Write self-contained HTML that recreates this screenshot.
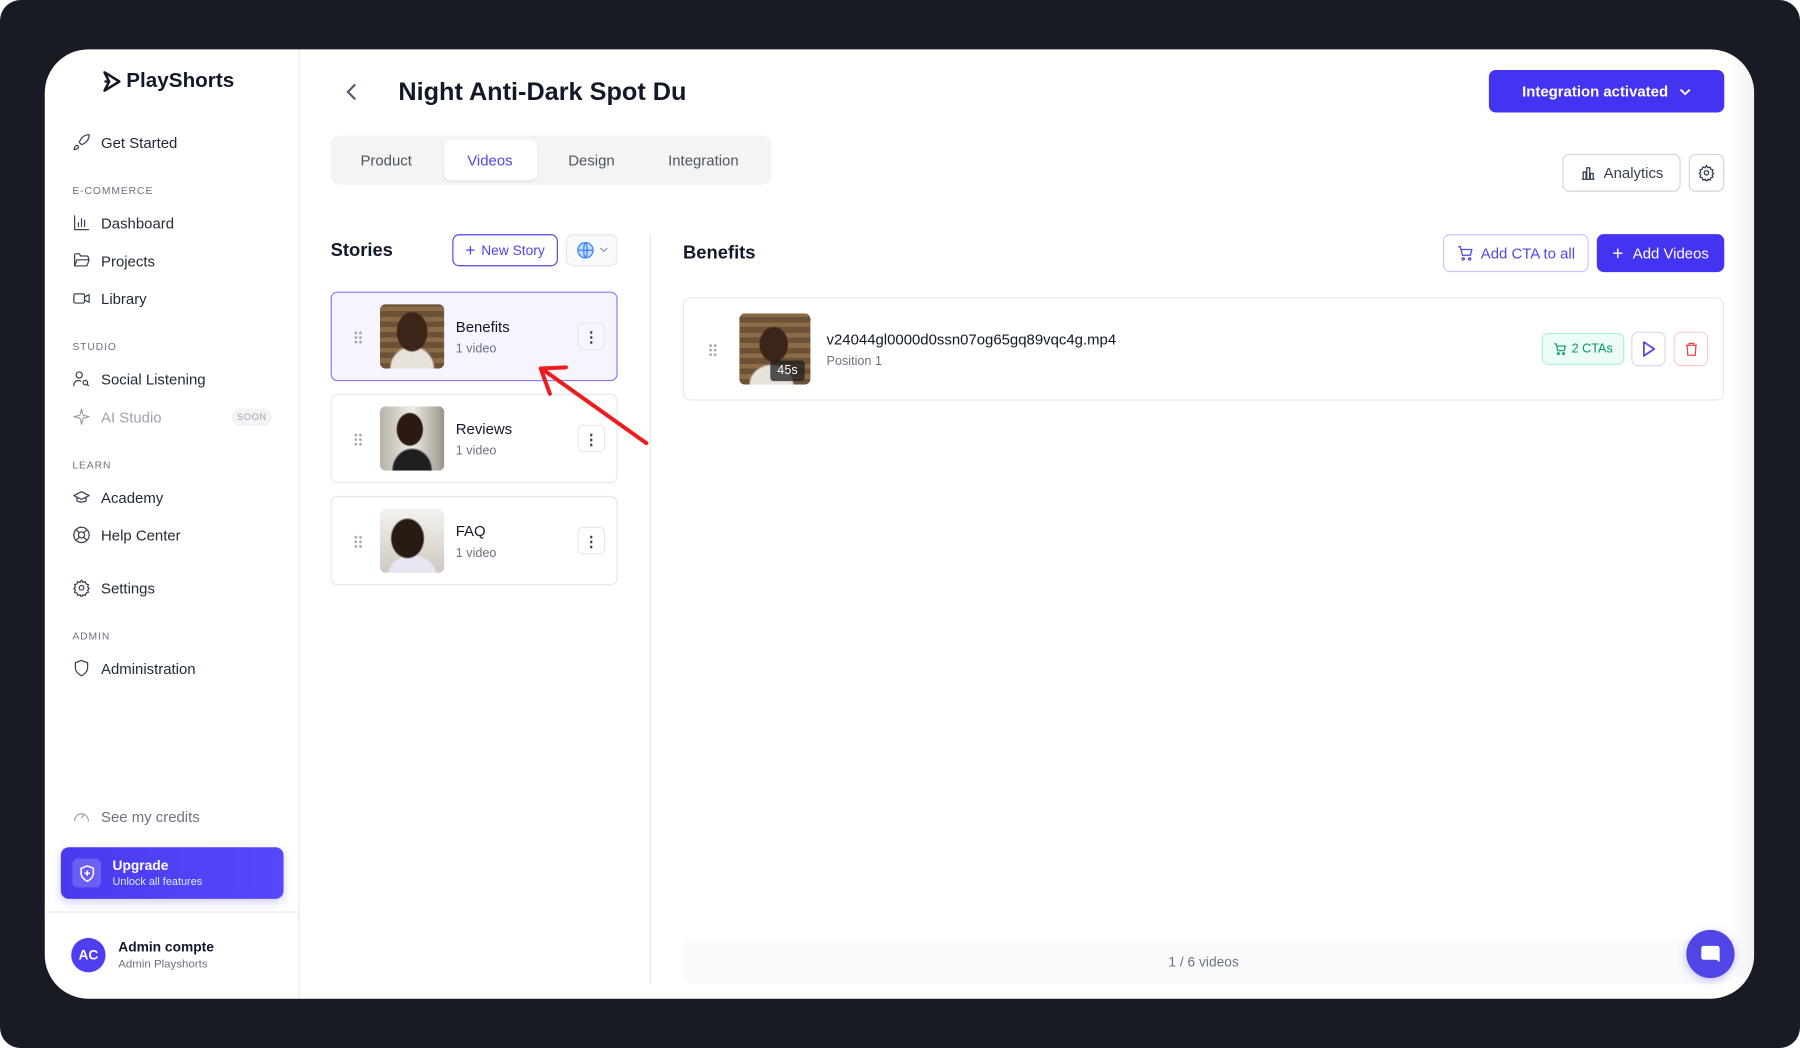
<!DOCTYPE html>
<html><head><meta charset="utf-8"><style>
*{box-sizing:border-box;margin:0;padding:0}
html,body{width:1800px;height:1048px;overflow:hidden;background:#fff}
body{font-family:"Liberation Sans",sans-serif;color:#111827}
#s{position:absolute;left:0;top:0;width:1568px;height:913px;transform:scale(1.14796);transform-origin:0 0;background:#181b23;border-radius:18px;overflow:hidden}
.a{position:absolute}
.panel{left:39px;top:43px;width:1489px;height:827px;background:#fff;border-radius:38px;overflow:hidden}
.side{left:0;top:0;width:222px;height:827px;border-right:1px solid #e5e7eb}
.nav{position:absolute;left:24px;font-size:13px;color:#1f2937;display:flex;align-items:center;gap:9px;height:20px}
.nav svg{width:16px;height:16px;stroke:#374151;fill:none;stroke-width:1.6;stroke-linecap:round;stroke-linejoin:round}
.lbl{position:absolute;left:24px;font-size:9px;letter-spacing:.8px;color:#6b7280}
.btn{position:absolute;border-radius:6px;display:flex;align-items:center;justify-content:center;font-size:13px}
.card{position:absolute;left:249px;width:250px;height:78px;border:1px solid #e5e7eb;border-radius:6px;background:#fff}
.card .th{position:absolute;left:42px;top:10px;width:56px;height:56px;border-radius:5px;overflow:hidden}
.card .t{position:absolute;left:108px;top:22px;font-size:13px;color:#111827}
.card .st{position:absolute;left:108px;top:43px;font-size:11px;color:#6b7280}
.card .k{position:absolute;left:214px;top:26px;width:24px;height:24px;border:1px solid #e5e7eb;border-radius:5px;display:flex;align-items:center;justify-content:center;font-size:13px;font-weight:bold;color:#374151;line-height:1}
.dots{position:absolute;width:8px;height:12px;background-image:radial-gradient(circle,#9ca3af 1px,transparent 1.3px);background-size:4px 4px}
</style></head><body><div id="s">
<div class="a panel">
 <div class="a side">
  <div class="a" style="left:51px;top:17px;display:flex;align-items:center;gap:5px;font-size:18px;font-weight:bold;color:#111827">
   <svg width="15" height="18" viewBox="0 0 15 18"><path d="M1 1l13 8-13 8 4-8z" fill="none" stroke="#111827" stroke-width="2.2" stroke-linejoin="round"/><path d="M1 9h5" stroke="#111827" stroke-width="2"/></svg>PlayShorts</div>
  <div class="nav" style="top:71px"><svg viewBox="0 0 24 24"><path d="M4.5 16.5c-1.5 1.3-2 5-2 5s3.7-.5 5-2c.7-.8.7-2.1-.1-2.9a2.2 2.2 0 0 0-2.9-.1zM12 15l-3-3a22 22 0 0 1 2-4A13 13 0 0 1 22 2c0 2.7-.8 7.5-6 11a22 22 0 0 1-4 2z"/></svg>Get Started</div>
  <div class="lbl" style="top:118px">E-COMMERCE</div>
  <div class="nav" style="top:141px"><svg viewBox="0 0 24 24"><path d="M3 3v18h18M8 17v-5M12 17V7M16 17v-8"/></svg>Dashboard</div>
  <div class="nav" style="top:174px"><svg viewBox="0 0 24 24"><path d="M3 19V5a2 2 0 0 1 2-2h4l2 3h8a2 2 0 0 1 2 2v2M3 19l3-8h16l-3 8z"/></svg>Projects</div>
  <div class="nav" style="top:207px"><svg viewBox="0 0 24 24"><rect x="2" y="6" width="14" height="12" rx="2"/><path d="M16 10l6-3v10l-6-3"/></svg>Library</div>
  <div class="lbl" style="top:254px">STUDIO</div>
  <div class="nav" style="top:277px"><svg viewBox="0 0 24 24"><circle cx="9" cy="7" r="4"/><path d="M2 21v-1a6 6 0 0 1 9-5"/><circle cx="17" cy="17" r="3"/><path d="M21 21l-2-2"/></svg>Social Listening</div>
  <div class="nav" style="top:310px;color:#9ca3af"><svg viewBox="0 0 24 24" style="stroke:#9ca3af"><path d="M12 2l2 8 8 2-8 2-2 8-2-8-8-2 8-2z"/></svg>AI Studio</div>
  <div class="a" style="left:163px;top:313px;width:35px;height:15px;border-radius:8px;background:#f3f4f6;font-size:8px;color:#9ca3af;display:flex;align-items:center;justify-content:center;letter-spacing:.6px">SOON</div>
  <div class="lbl" style="top:357px">LEARN</div>
  <div class="nav" style="top:380px"><svg viewBox="0 0 24 24"><path d="M22 10L12 5 2 10l10 5 10-5zM6 12v5c3 2 9 2 12 0v-5"/></svg>Academy</div>
  <div class="nav" style="top:413px"><svg viewBox="0 0 24 24"><circle cx="12" cy="12" r="10"/><circle cx="12" cy="12" r="4"/><path d="M5 5l4 4M15 15l4 4M19 5l-4 4M9 15l-4 4"/></svg>Help Center</div>
  <div class="nav" style="top:459px"><svg viewBox="0 0 24 24"><circle cx="12" cy="12" r="3"/><path d="M12 2l2 3 3-1 1 3 3 1-1 3 2 2-2 2 1 3-3 1-1 3-3-1-2 3-2-3-3 1-1-3-3-1 1-3-2-2 2-2-1-3 3-1 1-3 3 1z"/></svg>Settings</div>
  <div class="lbl" style="top:506px">ADMIN</div>
  <div class="nav" style="top:529px"><svg viewBox="0 0 24 24"><path d="M12 22s8-4 8-10V5l-8-3-8 3v7c0 6 8 10 8 10z"/></svg>Administration</div>
  <div class="nav" style="top:658px;color:#6b7280"><svg viewBox="0 0 24 24" style="stroke:#9ca3af"><path d="M3 18a9 9 0 1 1 18 0M12 14l3-4"/></svg>See my credits</div>
  <div class="a" style="left:14px;top:695px;width:194px;height:45px;border-radius:7px;background:linear-gradient(90deg,#4a3aef,#5548fb);box-shadow:0 3px 8px rgba(79,70,229,.25)">
   <div class="a" style="left:10px;top:10px;width:25px;height:25px;border-radius:5px;background:rgba(255,255,255,.18);display:flex;align-items:center;justify-content:center"><svg width="16" height="16" viewBox="0 0 24 24" fill="none" stroke="#fff" stroke-width="2" stroke-linejoin="round"><path d="M12 22s8-4 8-10V5l-8-3-8 3v7c0 6 8 10 8 10z"/><path d="M12 8v7M8.5 11.5h7"/></svg></div>
   <div class="a" style="left:45px;top:9px;color:#fff;font-size:12px;font-weight:bold">Upgrade</div>
   <div class="a" style="left:45px;top:25px;color:#e0e7ff;font-size:9.5px">Unlock all features</div>
  </div>
  <div class="a" style="left:0;top:751px;width:222px;height:1px;background:#e5e7eb"></div>
  <div class="a" style="left:23px;top:774px;width:30px;height:30px;border-radius:50%;background:#4f3ef0;color:#fff;font-size:12px;font-weight:bold;display:flex;align-items:center;justify-content:center">AC</div>
  <div class="a" style="left:64px;top:775px;font-size:12px;font-weight:bold">Admin compte</div>
  <div class="a" style="left:64px;top:792px;font-size:10px;color:#6b7280">Admin Playshorts</div>
 </div>
 <svg class="a" style="left:261px;top:29px" width="12" height="16" viewBox="0 0 12 16"><path d="M9 2L3 8l6 6" fill="none" stroke="#4b5563" stroke-width="1.8" stroke-linecap="round"/></svg>
 <div class="a" style="left:308px;top:24px;font-size:22px;font-weight:600;color:#111827">Night Anti-Dark Spot Du</div>
 <div class="btn" style="left:1258px;top:18px;width:205px;height:37px;background:#4433f0;color:#fff;font-weight:bold;gap:10px">Integration activated <svg width="10" height="8" viewBox="0 0 10 8"><path d="M1 2l4 4 4-4" fill="none" stroke="#fff" stroke-width="1.6"/></svg></div>
 <div class="a" style="left:249px;top:75px;width:384px;height:43px;background:#f4f4f5;border-radius:8px"></div>
 <div class="a" style="left:348px;top:79px;width:81px;height:35px;background:#fff;border-radius:6px;box-shadow:0 1px 2px rgba(0,0,0,.08)"></div>
 <div class="a" style="left:275px;top:89px;font-size:13px;color:#4b5563">Product</div>
 <div class="a" style="left:368px;top:89px;font-size:13px;color:#4f46e5">Videos</div>
 <div class="a" style="left:456px;top:89px;font-size:13px;color:#4b5563">Design</div>
 <div class="a" style="left:543px;top:89px;font-size:13px;color:#4b5563">Integration</div>
 <div class="btn" style="left:1322px;top:91px;width:103px;height:33px;border:1px solid #d1d5db;color:#374151;gap:6px"><svg width="15" height="15" viewBox="0 0 24 24" fill="none" stroke="#374151" stroke-width="1.8"><path d="M3 21h18M5 21V11h4v10M10 21V5h4v16M15 21v-8h4v8"/></svg>Analytics</div>
 <div class="btn" style="left:1432px;top:91px;width:31px;height:33px;border:1px solid #d1d5db"><svg width="15" height="15" viewBox="0 0 24 24" fill="none" stroke="#374151" stroke-width="1.8"><circle cx="12" cy="12" r="3"/><path d="M12 2l2 3 3-1 1 3 3 1-1 3 2 2-2 2 1 3-3 1-1 3-3-1-2 3-2-3-3 1-1-3-3-1 1-3-2-2 2-2-1-3 3-1 1-3 3 1z"/></svg></div>
 <div class="a" style="left:249px;top:167px;font-size:16px;font-weight:600">Stories</div>
 <div class="btn" style="left:355px;top:161px;width:92px;height:28px;border:1px solid #4f46e5;color:#4f46e5;font-size:12px;gap:5px"><span style="font-size:15px">+</span>New Story</div>
 <div class="btn" style="left:454px;top:161px;width:45px;height:28px;border:1px solid #e5e7eb;background:#f9fafb;gap:4px"><svg width="16" height="16" viewBox="0 0 24 24" fill="none" stroke="#3b82f6" stroke-width="1.6"><circle cx="12" cy="12" r="10" fill="#bfdbfe"/><path d="M2 12h20M12 2c3 3 3 17 0 20M12 2c-3 3-3 17 0 20"/></svg><svg width="8" height="6" viewBox="0 0 8 6"><path d="M1 1l3 3 3-3" fill="none" stroke="#9ca3af" stroke-width="1.2"/></svg></div>
 <div class="a" style="left:527px;top:161px;width:1px;height:653px;background:#e5e7eb"></div>
 <div class="card" style="top:211px;background:#f5f4ff;border:1.5px solid #8178f7"><div class="dots" style="left:19px;top:33px"></div><div class="th" style="background:radial-gradient(ellipse 14px 18px at 28px 24px,#3b2418 90%,transparent),radial-gradient(ellipse 20px 20px at 28px 56px,#e8e2dc 90%,transparent),repeating-linear-gradient(0deg,#6b5136 0 5px,#8a6a47 5px 9px)"></div><div class="t">Benefits</div><div class="st">1 video</div><div class="k">⋮</div></div>
 <div class="card" style="top:300px"><div class="dots" style="left:19px;top:33px"></div><div class="th" style="background:radial-gradient(ellipse 12px 15px at 26px 20px,#2a1a12 90%,transparent),radial-gradient(ellipse 18px 20px at 28px 56px,#1f1f1f 90%,transparent),linear-gradient(90deg,#b7b1a8,#efece7 50%,#9b948b)"></div><div class="t">Reviews</div><div class="st">1 video</div><div class="k">⋮</div></div>
 <div class="card" style="top:389px"><div class="dots" style="left:19px;top:33px"></div><div class="th" style="background:radial-gradient(ellipse 15px 18px at 24px 26px,#2a1a14 90%,transparent),radial-gradient(ellipse 22px 18px at 28px 58px,#eae5f3 90%,transparent),linear-gradient(180deg,#f4f2f0,#cfc8c0)"></div><div class="t">FAQ</div><div class="st">1 video</div><div class="k">⋮</div></div>
 <svg class="a" style="left:420px;top:270px" width="110" height="80" viewBox="0 0 110 80"><path d="M104 73L14 9" stroke="#ee1c1c" stroke-width="3.5" stroke-linecap="round"/><path d="M34 7L12 8 20 30" fill="none" stroke="#ee1c1c" stroke-width="3.5" stroke-linecap="round" stroke-linejoin="round"/></svg>
 <div class="a" style="left:556px;top:169px;font-size:16px;font-weight:600">Benefits</div>
 <div class="btn" style="left:1218px;top:161px;width:127px;height:33px;border:1px solid #c7c2fb;color:#4f46e5;gap:6px"><svg width="15" height="15" viewBox="0 0 24 24" fill="none" stroke="#4f46e5" stroke-width="1.8"><path d="M2 3h3l3 12h11l2-8H7"/><circle cx="9" cy="20" r="1.5"/><circle cx="18" cy="20" r="1.5"/></svg>Add CTA to all</div>
 <div class="btn" style="left:1352px;top:161px;width:111px;height:33px;background:#4433f0;color:#fff;gap:8px"><span style="font-size:17px;font-weight:300">+</span>Add Videos</div>
 <div class="a" style="left:556px;top:216px;width:907px;height:90px;border:1px solid #e5e7eb;border-radius:7px">
  <div class="dots" style="left:21px;top:39px"></div>
  <div class="a" style="left:48px;top:13px;width:62px;height:62px;border-radius:5px;overflow:hidden;background:radial-gradient(ellipse 13px 16px at 30px 27px,#3b2418 90%,transparent),radial-gradient(ellipse 20px 18px at 28px 62px,#e8e2dc 90%,transparent),repeating-linear-gradient(0deg,#6b5136 0 5px,#8a6a47 5px 9px)"><div class="a" style="left:27px;top:41px;width:30px;height:18px;background:rgba(30,30,30,.75);border-radius:3px;color:#fff;font-size:11px;display:flex;align-items:center;justify-content:center">45s</div></div>
  <div class="a" style="left:124px;top:28px;font-size:13px">v24044gl0000d0ssn07og65gq89vqc4g.mp4</div>
  <div class="a" style="left:124px;top:49px;font-size:11px;color:#6b7280">Position 1</div>
  <div class="btn" style="left:747px;top:30px;width:72px;height:28px;background:#ecfdf5;border:1px solid #a7f3d0;color:#059669;font-size:11px;gap:4px"><svg width="12" height="12" viewBox="0 0 24 24" fill="none" stroke="#059669" stroke-width="2"><path d="M2 3h3l3 12h11l2-8H7"/><circle cx="9" cy="20" r="1.5"/><circle cx="18" cy="20" r="1.5"/></svg>2 CTAs</div>
  <div class="btn" style="left:825px;top:29px;width:30px;height:30px;border:1px solid #d9d6fb"><svg width="12" height="14" viewBox="0 0 12 14"><path d="M2 1l9 6-9 6z" fill="none" stroke="#4f46e5" stroke-width="1.5" stroke-linejoin="round"/></svg></div>
  <div class="btn" style="left:862px;top:29px;width:30px;height:30px;border:1px solid #fecaca"><svg width="13" height="14" viewBox="0 0 24 24" fill="none" stroke="#ef4444" stroke-width="2"><path d="M3 6h18M8 6V3h8v3M5 6l1 16h12l1-16"/></svg></div>
 </div>
 <div class="a" style="left:556px;top:776px;width:907px;height:38px;background:#f9fafb;border-radius:6px;display:flex;align-items:center;justify-content:center;font-size:12px;color:#6b7280">1 / 6 videos</div>
 <div class="a" style="left:1468px;top:0;width:21px;height:827px;background:linear-gradient(90deg,#fff,#f1f2f4)"></div>
 <div class="a" style="left:1430px;top:767px;width:42px;height:42px;border-radius:50%;background:#4f46e5;box-shadow:0 2px 8px rgba(79,70,229,.35);display:flex;align-items:center;justify-content:center"><svg width="20" height="20" viewBox="0 0 20 20"><path d="M4 3h12a2 2 0 0 1 2 2v12l-3-2H4a2 2 0 0 1-2-2V5a2 2 0 0 1 2-2z" fill="#fff"/></svg></div>
</div>
</div></body></html>
